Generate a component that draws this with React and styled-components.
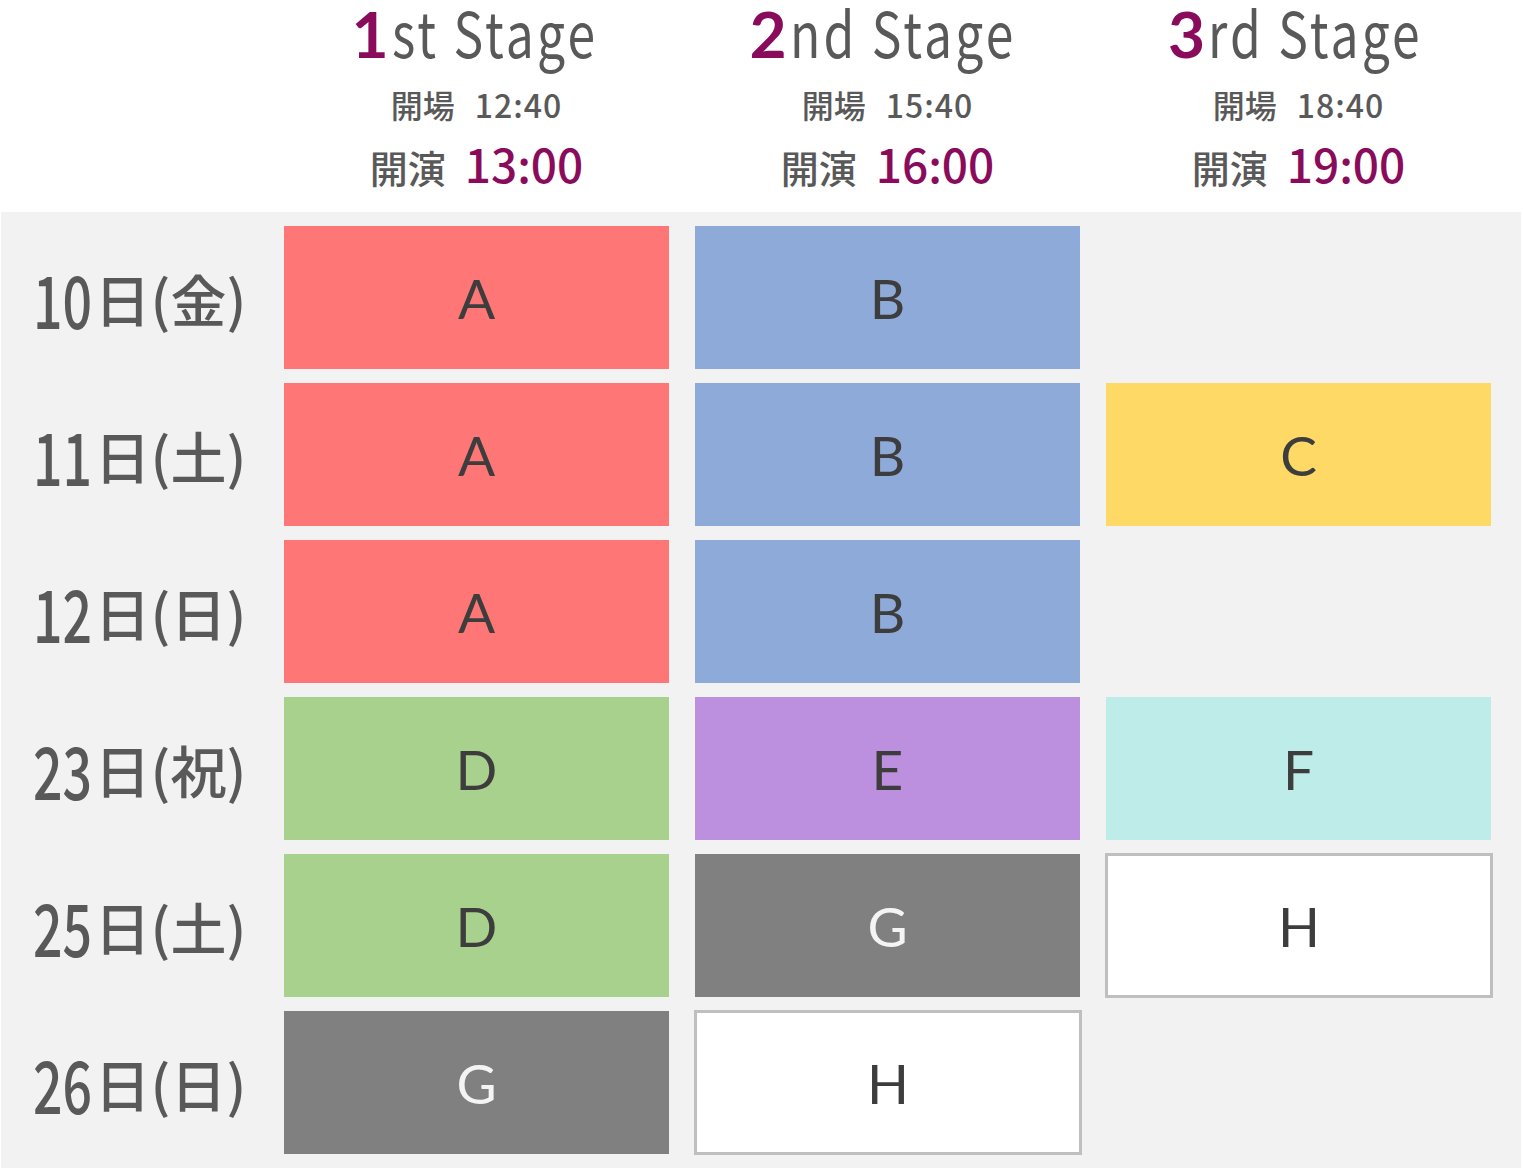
import React from "react";
import styled, { createGlobalStyle } from "styled-components";

// timetable data: one entry per day, null where no show runs
const stages = [
  { num: "1", suffix: "st", open: "12:40", start: "13:00" },
  { num: "2", suffix: "nd", open: "15:40", start: "16:00" },
  { num: "3", suffix: "rd", open: "18:40", start: "19:00" },
];

const days = [
  { date: "10", week: "金", shows: ["A", "B", null] },
  { date: "11", week: "土", shows: ["A", "B", "C"] },
  { date: "12", week: "日", shows: ["A", "B", null] },
  { date: "23", week: "祝", shows: ["D", "E", "F"] },
  { date: "25", week: "土", shows: ["D", "G", "H"] },
  { date: "26", week: "日", shows: ["G", "H", null] },
];

const palette = {
  A: "#ff7676",
  B: "#8eaad9",
  C: "#ffd966",
  D: "#a9d18e",
  E: "#bc8fdf",
  F: "#bdece9",
  G: "#808080",
  H: "#ffffff",
};

const GlobalStyle = createGlobalStyle`
  body {
    margin: 0;
    background: #ffffff;
    font-family: "Noto Sans CJK JP", "Noto Sans", sans-serif;
  }
`;

const App = () => {
  return (
    <>
      <GlobalStyle />
      <Page>
        <Header>
          <div></div>
          {stages.map((s) => (
            <StageHead key={s.num}>
              <Title>
                <Num>{s.num}</Num>
                <TitleText>{s.suffix} Stage</TitleText>
              </Title>
              <OpenLine>
                開場<OpenTime>{s.open}</OpenTime>
              </OpenLine>
              <StartLine>
                開演<StartTime>{s.start}</StartTime>
              </StartLine>
            </StageHead>
          ))}
        </Header>
        <Board>
          {days.map((d) => (
            <React.Fragment key={d.date}>
              <DayLabel>
                <DayNum>{d.date}</DayNum>
                <span>日({d.week})</span>
              </DayLabel>
              {d.shows.map((show, i) =>
                show ? (
                  <Show key={i} show={show}>
                    {show}
                  </Show>
                ) : (
                  <div key={i}></div>
                )
              )}
            </React.Fragment>
          ))}
        </Board>
      </Page>
    </>
  );
};

const Page = styled.div`
  width: 1523px;
  padding-bottom: 8px;
`;

const Header = styled.div`
  display: grid;
  grid-template-columns: 257px repeat(3, 385px);
  column-gap: 26px;
  margin: 0 2px 0 1px;
  height: 212px;
`;

const StageHead = styled.div`
  display: flex;
  flex-direction: column;
  align-items: center;
  color: #595959;
`;

const Title = styled.div`
  display: flex;
  align-items: baseline;
  height: 72px;
  line-height: 62px;
  white-space: nowrap;
`;

const Num = styled.span`
  font-family: Lato, sans-serif;
  font-size: 64px;
  color: #8a0b5c;
  font-weight: 700;
`;

// the face in the picture is a condensed one, so squeeze the latin part
const TitleText = styled.span`
  display: inline-block;
  font-size: 63px;
  letter-spacing: 4px;
  margin-left: 3px;
  margin-right: -51px;
  transform: scaleX(0.79);
  transform-origin: left center;
`;

const OpenLine = styled.div`
  margin-top: 12px;
  font-size: 32px;
  line-height: 40px;
  font-weight: 500;
  white-space: pre;
`;

const OpenTime = styled.span`
  margin-left: 20px;
  letter-spacing: 1px;
`;

const StartLine = styled.div`
  margin-top: 11px;
  font-size: 38px;
  line-height: 56px;
  font-weight: 500;
  white-space: pre;
`;

const StartTime = styled.span`
  margin-left: 19px;
  font-size: 46px;
  color: #8a0b5c;
`;

const Board = styled.div`
  display: grid;
  grid-template-columns: 257px repeat(3, 385px);
  grid-auto-rows: 143px;
  column-gap: 26px;
  row-gap: 14px;
  padding: 14px 0;
  margin: 0 2px 0 1px;
  background: #f2f2f2;
`;

const DayLabel = styled.div`
  display: flex;
  align-items: center;
  justify-content: center;
  padding-left: 20px;
  color: #595959;
  font-size: 56px;
  font-weight: 500;
  white-space: nowrap;
`;

const DayNum = styled.span`
  display: inline-block;
  font-size: 72px;
  margin-right: -20px;
  transform: scaleX(0.72);
  transform-origin: left center;
`;

const Show = styled.div`
  display: flex;
  align-items: center;
  justify-content: center;
  box-sizing: border-box;
  background: ${(props) => palette[props.show]};
  color: ${(props) => (props.show === "G" ? "#f4f4f4" : "#3d3d3d")};
  font-family: Lato, sans-serif;
  font-size: 55px;
  border: ${(props) => (props.show === "H" ? "3px solid #bfbfbf" : "none")};
  margin: ${(props) => (props.show === "H" ? "-1px -2px -1px -1px" : "0")};
`;

export default App;
